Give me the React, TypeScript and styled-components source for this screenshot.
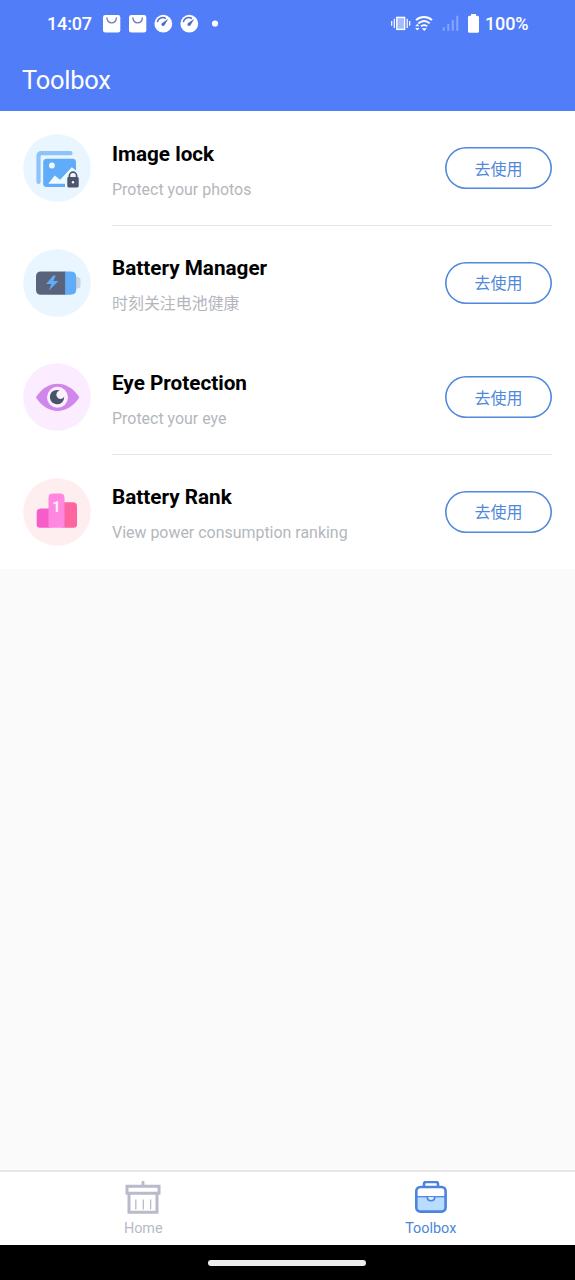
import React from "react";
import styled, { createGlobalStyle } from "styled-components";

const GlobalStyle = createGlobalStyle`
  * { box-sizing: border-box; }
  body {
    margin: 0;
    font-family: Roboto, "Noto Sans CJK SC", sans-serif;
    background: #fafafa;
  }
`;

const Screen = styled.div`
  width: 575px;
  height: 1280px;
  display: flex;
  flex-direction: column;
  background: #fafafa;
  overflow: hidden;
`;

const Header = styled.header`
  height: 111px;
  flex: none;
  background: #527df8;
  color: #fff;
`;

const StatusBar = styled.div`
  height: 48px;
  padding: 0 47px;
  display: flex;
  align-items: center;
  justify-content: space-between;
`;

const StatusGroup = styled.div`
  display: flex;
  align-items: center;
`;

const StatusText = styled.span<{ $width: number }>`
  font-size: 18px;
  font-weight: 500;
  line-height: 24px;
  letter-spacing: -0.15px;
  white-space: nowrap;
  width: ${(p) => p.$width}px;
`;

const AppTitle = styled.h1`
  margin: 0;
  padding: 16px 22px 0;
  font-size: 25.4px;
  line-height: 32px;
  font-weight: 400;
  letter-spacing: -0.2px;
`;

const List = styled.main`
  flex: none;
  height: 458px;
  display: grid;
  grid-template-rows: repeat(4, 114.5px);
  background: #fff;
`;

const Row = styled.section`
  display: flex;
  padding: 0 23px;
  gap: 21px;
  align-items: center;
`;

const IconDisc = styled.svg`
  width: 68px;
  height: 68px;
  flex: none;
`;

const RowBody = styled.div<{ $divided: boolean }>`
  flex: 1;
  height: 100%;
  padding-top: 1px;
  display: flex;
  align-items: center;
  justify-content: space-between;
  border-bottom: 1px solid ${(p) => (p.$divided ? "#e6e7e9" : "transparent")};
`;

const RowLabels = styled.div`
  padding-top: 6px;
`;

const RowTitle = styled.h2`
  margin: 0;
  font-size: 20.7px;
  line-height: 26px;
  font-weight: 700;
  color: #000;
`;

const RowText = styled.p`
  margin: 11px 0 0;
  font-size: 15.95px;
  line-height: 24px;
  color: #b3b7bc;
`;

const UseButton = styled.button`
  width: 107px;
  height: 42px;
  padding: 3px 0 0;
  border: 0;
  box-shadow: inset 0 0 0 1.6px #4f88dc;
  border-radius: 21px;
  background: #fff;
  color: #4f88dc;
  font: 400 16px/24px Roboto, "Noto Sans CJK SC", sans-serif;
`;

const TabBar = styled.nav`
  margin-top: auto;
  height: 75px;
  flex: none;
  display: grid;
  grid-template-columns: 1fr 1fr;
  background: #fff;
  border-top: 2px solid #e7e7e8;
`;

const Tab = styled.div<{ $active?: boolean }>`
  display: flex;
  flex-direction: column;
  align-items: center;
  padding: 9px 1px 0 0;
  color: ${(p) => (p.$active ? "#4b86d8" : "#b6bac6")};
  font-size: 14.4px;
  line-height: 18px;
`;

const TabIcon = styled.svg`
  width: 40px;
  height: 36px;
  margin-bottom: 3px;
`;

const GestureArea = styled.footer`
  height: 35px;
  flex: none;
  padding-right: 1px;
  background: #000;
  display: flex;
  justify-content: center;
  align-items: center;
`;

const GestureBar = styled.div`
  width: 158px;
  height: 6px;
  border-radius: 3px;
  background: #eeecec;
`;

const NoticeIcons = () => (
  <svg width="120" height="24" viewBox="100 12 120 24" fill="none">
    {[103, 129].map((x) => (
      <g key={x}>
        <rect x={x} y="15" width="17.3" height="17.5" rx="2.3" fill="#fff" />
        <path d={`M${x + 3.8} 17.4c.4 7.2 9.3 7.2 9.7 0`} stroke="#6e83bd" strokeWidth="1.3" />
      </g>
    ))}
    {[163.3, 189.3].map((x) => (
      <g key={x}>
        <circle cx={x} cy="23.7" r="8.9" fill="#fff" />
        <path d={`M${x - 6} 22.2c.8-4.3 5-5.6 8.6-3.7`} stroke="#4b6dcc" strokeWidth="1.5" />
        <path d={`M${x + 5} 18.8l-3.8 6.4c-1.2 1.8-4 .2-2.9-1.6z`} fill="#4b6dcc" />
      </g>
    ))}
    <circle cx="215" cy="23.5" r="3.1" fill="#fff" />
  </svg>
);

const SystemIcons = () => (
  <svg width="95" height="24" viewBox="390 12 95 24" fill="none">
    <rect x="396.8" y="17.4" width="7.8" height="12" fill="#a3bbff" stroke="#fff" strokeWidth="1.4" />
    <path d="M394.3 18.8v9.2M407.2 18.8v9.2M391.7 21v4.8M409.7 21v4.8" stroke="#fff" strokeWidth="1.2" />
    <path d="M416 20.1c4.7-4.1 11.2-4.1 16 0M418.3 23.4c3.6-3 8-3 11.4 0M421.1 26.3c2-1.5 4.2-1.5 6 0" stroke="#fff" strokeWidth="1.9" />
    <path d="M421.8 28.3h5l-2.5 2.6z" fill="#fff" />
    <path d="M415.2 26.2l2.1-2.5 2.1 2.5zM415.2 28l2.1 2.5 2.1-2.5z" fill="#fff" />
    <path d="M443.7 27.3v3.5M448.3 24v6.8M452.8 20.2v10.6M457.3 15.8v15" stroke="#88a5ff" strokeWidth="2" />
    <path d="M468 17.2q0-1.5 1.5-1.5h1.5v-1.6h5v1.6h1.5q1.5 0 1.5 1.5v14.1q0 1.5-1.5 1.5h-8q-1.5 0-1.5-1.5z" fill="#fff" />
  </svg>
);

const ImageLockIcon = () => (
  <IconDisc viewBox="0 0 68 68" fill="none">
    <circle cx="34" cy="34" r="33.8" fill="#e9f6ff" />
    <path d="M15.5 48V22.5q0-3.3 3.3-3.3H47.5" stroke="#8dc2fa" strokeWidth="4.2" strokeLinecap="round" />
    <rect x="20.2" y="24.7" width="32.8" height="28.4" rx="3.5" fill="#61acf8" />
    <circle cx="28.9" cy="31.5" r="2.9" fill="#effaff" />
    <path d="M25.3 49.8l6.4-8.3 5.4 4.2 11.7-12.5 4.5 3.6v13z" fill="#effaff" />
    <path d="M42 54V43q0-2 2-2h8q4 0 4 4v9z" fill="#e9f6ff" />
    <path d="M46.4 44v-2.2a3.6 3.6 0 0 1 7.2 0V44" stroke="#4b566b" strokeWidth="1.7" />
    <rect x="44.3" y="43" width="11.4" height="10.4" rx="1.4" fill="#4b566b" />
    <circle cx="50" cy="48.2" r="1.2" fill="#fff" />
  </IconDisc>
);

const BatteryIcon = () => (
  <IconDisc viewBox="0 0 68 68">
    <circle cx="34" cy="34" r="33.8" fill="#e9f6ff" />
    <path d="M51 28h3.5q3 0 3 3v5.5q0 3-3 3H51z" fill="#ccd4df" />
    <path d="M18 22.4h24.8v23.4H18q-5 0-5-5V27.4q0-5 5-5z" fill="#59647a" />
    <path d="M42.2 22.4h5.3q5.7 0 5.7 5.2v13q0 5.2-5.7 5.2h-5.3z" fill="#61acf8" />
    <path d="M30.3 26.5l-7.2 8.6h5.2L26 41.5l9.4-9.5h-5.1l2.4-5.5z" fill="#61acf8" />
  </IconDisc>
);

const EyeIcon = () => (
  <IconDisc viewBox="0 0 68 68">
    <circle cx="34" cy="34" r="33.8" fill="#fcecff" />
    <path d="M12.9 34.3C24 16.1 45 16.1 56.4 34.3 45 52.5 24 52.5 12.9 34.3z" fill="#d087ec" />
    <circle cx="34.5" cy="34.3" r="10.5" fill="#fcf1ff" />
    <path d="M37 27.6a7.2 7.2 0 1 0 4.2 6.2 4.2 4.2 0 1 1-4.2-6.2z" fill="#485469" />
  </IconDisc>
);

const Numeral = styled.text`
  font: 700 14.5px Roboto, sans-serif;
  fill: #fff0fa;
`;

const RankIcon = () => (
  <IconDisc viewBox="0 0 68 68">
    <circle cx="34" cy="34" r="33.8" fill="#ffeef0" />
    <path d="M18 30.5h10v19.3H17q-3.3 0-3.3-3.3V34.7q0-4.2 4.3-4.2z" fill="#f65dc9" />
    <path d="M39.5 24.2h10.3q4.2 0 4.2 4.2v18.1q0 3.3-3.3 3.3H39.5z" fill="#fc659f" />
    <path d="M25.5 49.8V19.7q0-4.2 4.2-4.2h7.6q4.2 0 4.2 4.2v30.1z" fill="#ff87df" />
    <Numeral x="29.3" y="33.8">1</Numeral>
  </IconDisc>
);

const HomeIcon = () => (
  <TabIcon viewBox="0 0 40 36" fill="none" stroke="#b7bbca">
    <path d="M20 0v6" strokeWidth="2.8" />
    <path d="M4 5.3h32v6.9H4z" strokeWidth="3" />
    <path d="M6 13v18.3h28V13" strokeWidth="3" />
    <path d="M12.8 18.5v10M20.3 18.5v10M27.6 18.5v10" strokeWidth="1.3" />
  </TabIcon>
);

const ToolboxIcon = () => (
  <TabIcon viewBox="0 0 40 36" fill="none" stroke="#4b83e2" strokeWidth="2.6">
    <rect x="5.3" y="6" width="29.3" height="25" rx="4" fill="#fff" stroke="none" />
    <path d="M6 16h28v11q0 4-4 4H10q-4 0-4-4z" fill="#b9ddff" stroke="none" />
    <rect x="5.3" y="6" width="29.3" height="24.6" rx="4" />
    <path d="M13 6V3q0-2 2-2h10q2 0 2 2v3" />
    <path d="M5 15.7h30" strokeWidth="1.3" />
    <path d="M16.3 16c0 5 7.4 5 7.4 0" fill="#d5eaff" strokeWidth="1.7" />
  </TabIcon>
);

const tools = [
  { title: "Image lock", text: "Protect your photos", Icon: ImageLockIcon, divided: true },
  { title: "Battery Manager", text: "时刻关注电池健康", Icon: BatteryIcon, divided: false },
  { title: "Eye Protection", text: "Protect your eye", Icon: EyeIcon, divided: true },
  { title: "Battery Rank", text: "View power consumption ranking", Icon: RankIcon, divided: false },
];

export default function App() {
  return (
    <Screen>
      <GlobalStyle />
      <Header>
        <StatusBar>
          <StatusGroup>
            <StatusText $width={53}>14:07</StatusText>
            <NoticeIcons />
          </StatusGroup>
          <StatusGroup>
            <SystemIcons />
            <StatusText $width={43}>100%</StatusText>
          </StatusGroup>
        </StatusBar>
        <AppTitle>Toolbox</AppTitle>
      </Header>
      <List>
        {tools.map(({ title, text, Icon, divided }) => (
          <Row key={title}>
            <Icon />
            <RowBody $divided={divided}>
              <RowLabels>
                <RowTitle>{title}</RowTitle>
                <RowText>{text}</RowText>
              </RowLabels>
              <UseButton>去使用</UseButton>
            </RowBody>
          </Row>
        ))}
      </List>
      <TabBar>
        <Tab>
          <HomeIcon />
          Home
        </Tab>
        <Tab $active>
          <ToolboxIcon />
          Toolbox
        </Tab>
      </TabBar>
      <GestureArea>
        <GestureBar />
      </GestureArea>
    </Screen>
  );
}
